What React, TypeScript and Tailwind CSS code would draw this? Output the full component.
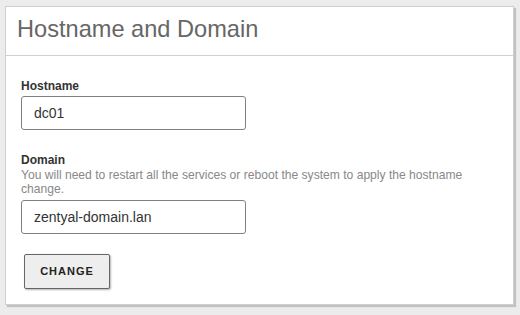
// ─── Hostname and Domain settings panel ──────────────────
const FONT = "font-['Liberation_Sans',Arial,sans-serif]"

interface FieldProps {
  label: string
  value: string
  help?: string
}

function Field({ label, value, help }: FieldProps) {
  return (
    <div className="flex flex-col">
      <label className="text-[12px] leading-[16px] font-bold text-[#333]">{label}</label>
      {help && (
        <p className="text-[12.1px] leading-[14px] text-[#888]">{help}</p>
      )}
      <input
        defaultValue={value}
        className={[
          'w-[225px] h-[34px] px-[12px] rounded-[3px]',
          'border border-[#808080] bg-white text-[14px] text-[#333] outline-none',
          help ? 'mt-[4px]' : 'mt-[2px]',
        ].join(' ')}
      />
    </div>
  )
}

export default function App() {
  return (
    <div className={`min-h-[315px] bg-[#ececec] pt-[6px] pl-[5px] ${FONT}`}>
      <div className="w-[509px] bg-white border border-[#cfcfcf] shadow-[2px_2px_1px_rgba(0,0,0,0.18)]">
        <div className="px-[11px] pt-[8px] pb-[12px] border-b border-[#cfcfcf]">
          <h2 className="text-[23.6px] leading-[28px] text-[#666] font-normal">Hostname and Domain</h2>
        </div>
        <div className="pl-[15px] pr-[16px] pt-[22px] pb-[15px] flex flex-col">
          <Field label="Hostname" value="dc01" />
          <div className="mt-[22px]">
            <Field
              label="Domain"
              value="zentyal-domain.lan"
              help="You will need to restart all the services or reboot the system to apply the hostname change."
            />
          </div>
          <div className="mt-[20px] pl-[3px]">
            <button
              type="button"
              className={[
                'h-[35px] w-[86px] bg-[#eeeeee] border border-[#666] rounded-[2px]',
                'shadow-[1px_1px_2px_rgba(0,0,0,0.3)]',
                'text-[11px] font-bold tracking-[1px] text-[#222]',
              ].join(' ')}
            >
              CHANGE
            </button>
          </div>
        </div>
      </div>
    </div>
  )
}
